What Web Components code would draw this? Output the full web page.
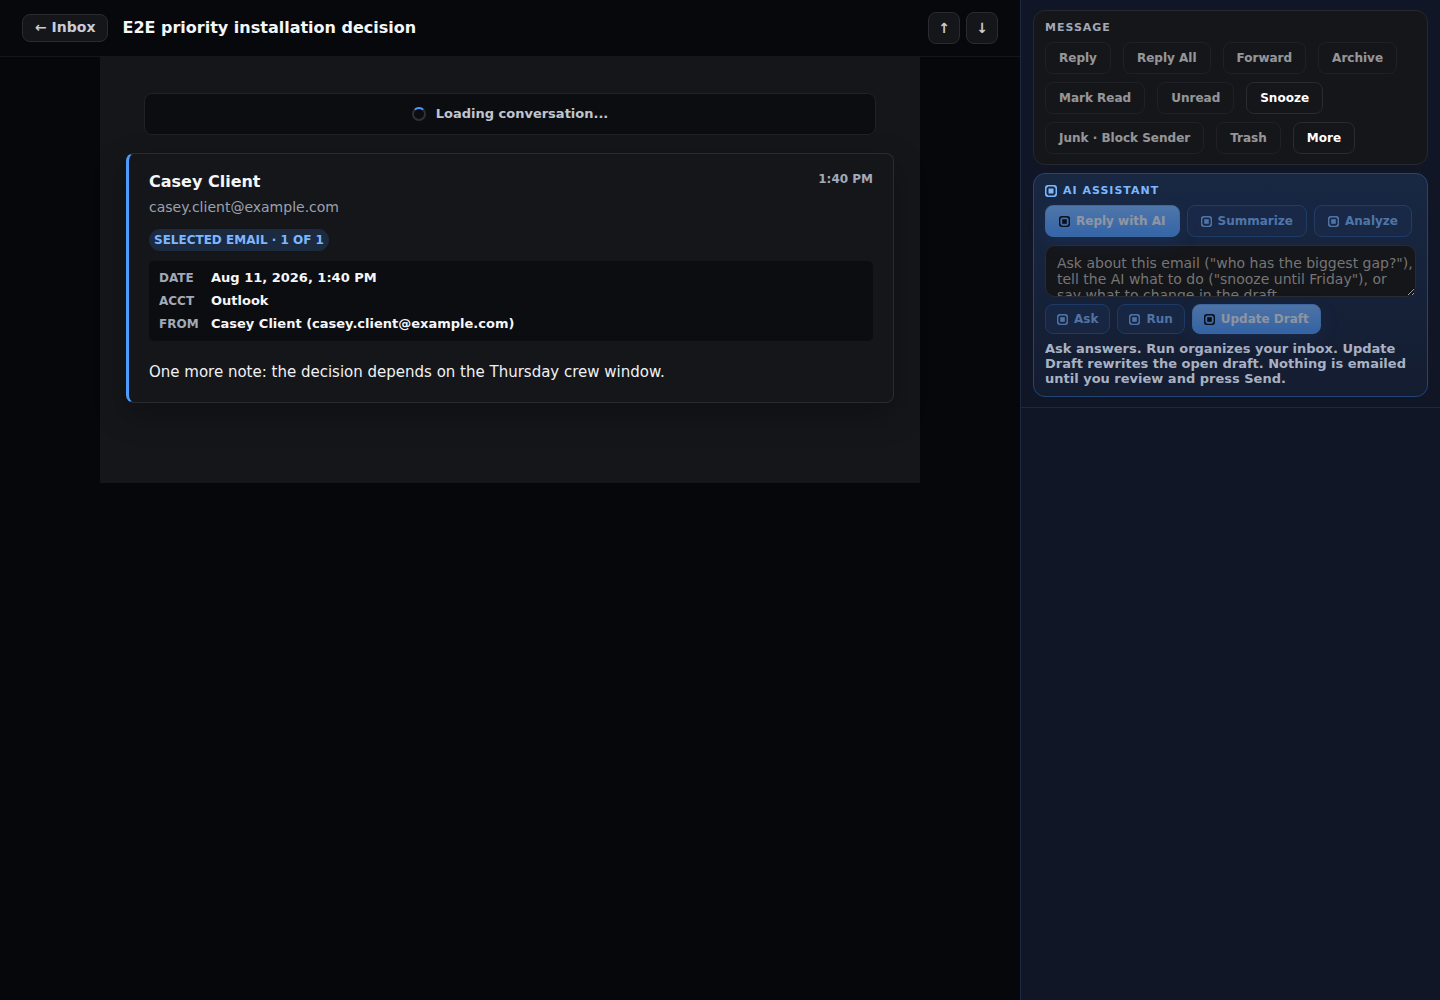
<!DOCTYPE html>
<html lang="en">
<head>
<meta charset="utf-8">
<title>E2E priority installation decision</title>
<style>
  html, body { margin: 0; min-height: 100%; background: #06070b; }
  body { font-family: "DejaVu Sans", sans-serif; color: #f5f6f8; font-size: 13px; }
</style>
</head>
<body>
<mail-reader></mail-reader>
<script>
const define = (name, html, setup) => {
  const template = document.createElement('template');
  template.innerHTML = `<style>*, ::before, ::after { box-sizing: border-box; } :host([hidden]) { display: none; }</style>` + html;
  customElements.define(name, class extends HTMLElement {
    constructor() {
      super();
      this.attachShadow({ mode: 'open' }).append(template.content.cloneNode(true));
    }
    connectedCallback() { if (setup) setup(this, this.shadowRoot); }
  });
};

define('ai-glyph', `
<style>
  :host { display: block; flex: none; width: 11px; height: 11px; }
  svg { display: block; width: 100%; height: 100%; }
</style>
<svg viewBox="0 0 12 12" aria-hidden="true">
  <path fill="currentColor" fill-rule="evenodd" d="M3 0h6a3 3 0 0 1 3 3v6a3 3 0 0 1-3 3H3a3 3 0 0 1-3-3V3a3 3 0 0 1 3-3zM3.2 1.5h5.6l1.7 1.7v5.6l-1.7 1.7H3.2L1.5 8.8V3.2z"/>
  <rect x="3.5" y="3.5" width="5" height="5" fill="currentColor"/>
</svg>`);

define('icon-button', `
<style>
  :host { display: block; }
  button {
    display: flex; align-items: center; justify-content: center;
    font: bold 14px/18px "DejaVu Sans", sans-serif;
    color: #c8cdd8; background: #15161a; border: 1px solid #2a2b30; border-radius: 8px;
    padding: 3px 12px 5px; cursor: pointer;
  }
  :host([square]) button { width: 32px; height: 32px; padding: 0; }
</style>
<button type="button"><slot></slot></button>`,
(host, root) => {
  if (host.title) root.querySelector('button').setAttribute('aria-label', host.title);
});

define('reader-bar', `
<style>
  :host {
    display: flex; align-items: center; gap: 14px; height: 57px; padding: 0 22px;
    background: #07080c; border-bottom: 1px solid #15161a;
  }
  h1 { flex: 1; margin: 0; font-size: 16px; line-height: 20px; font-weight: bold; }
  nav { display: flex; gap: 6px; }
</style>
<icon-button>← Inbox</icon-button>
<h1><slot></slot></h1>
<nav aria-label="Conversations">
  <icon-button square title="Previous">↑</icon-button>
  <icon-button square title="Next">↓</icon-button>
</nav>`);

define('loading-note', `
<style>
  :host {
    display: flex; align-items: center; justify-content: center; gap: 10px;
    margin: 0 18px; padding: 11px 12px; border: 1px solid #212227; border-radius: 8px;
    background: #0c0d11; color: #c0c5cf; font-size: 13px; line-height: 18px; font-weight: bold;
  }
  i { width: 14px; height: 14px; border: 2px solid #303136; border-top-color: #4d9bff; border-radius: 50%; }
</style>
<i></i><span role="status"><slot></slot></span>`);

define('meta-row', `
<style>
  :host { display: flex; align-items: baseline; line-height: 17px; font-weight: bold; }
  dt { width: 52px; font-size: 12px; color: #a2a9b8; }
  dd { margin: 0; font-size: 13px; }
</style>
<dt><slot name="label"></slot></dt><dd><slot></slot></dd>`);

define('mail-card', `
<style>
  :host {
    display: block; padding: 17px 20px 18px; background: #15161a;
    border: 1px solid #2a2b30; border-left: 3px solid #4d9bff; border-radius: 8px;
    box-shadow: 0 12px 32px rgba(0, 0, 0, .28);
  }
  header { display: flex; justify-content: space-between; align-items: flex-start; }
  h2 { margin: 0; font-size: 16px; line-height: 22px; }
  time { font-size: 12px; line-height: 16px; font-weight: bold; color: #a2a9b8; }
  address { margin-top: 4px; font-style: normal; font-size: 14px; line-height: 20px; color: #9ca1ae; }
  .tag {
    display: block; width: fit-content; margin-top: 12px; padding: 3px 5px; border-radius: 12px;
    background: #1c2a3f; color: #7db7ff; font-size: 12px; line-height: 16px; font-weight: bold;
  }
  dl {
    display: flex; flex-direction: column; gap: 5px; margin: 10px 0 0; padding: 8px 10px;
    background: #0c0d11; border-radius: 5px;
  }
  p { margin: 19px 0 0; font-size: 15px; line-height: 24px; color: #f0f1f4; }
</style>
<header><h2><slot name="sender"></slot></h2><time><slot name="time"></slot></time></header>
<address><slot name="address"></slot></address>
<span class="tag"><slot name="tag"></slot></span>
<dl><slot name="meta"></slot></dl>
<p><slot></slot></p>`);

define('action-button', `
<style>
  :host { display: block; }
  button {
    display: flex; align-items: center; gap: 6px; height: 32px; padding: 0 13px;
    font: bold 12px/16px "DejaVu Sans", sans-serif;
    color: #fff; background: #15161a; border: 1px solid #2a2b30; border-radius: 8px;
  }
  button:disabled { opacity: .55; }
  ai-glyph { display: none; }
  :host([ai]) ai-glyph { display: block; }
  :host([ai]) button { color: #7db7ff; background: #1a2b4c; border-color: #275089; }
  :host([ai=primary]) button {
    color: #f2f3f6; background: linear-gradient(#7db7ff, #4d9bff); border-color: #5c9ff0;
    box-shadow: 0 6px 18px rgba(45, 110, 220, .2);
  }
  :host([ai=primary]) ai-glyph { color: #000; }
  :host([compact]) button { height: 30px; padding: 0 11px; }
</style>
<button type="button"><ai-glyph></ai-glyph><slot></slot></button>`,
(host, root) => { root.querySelector('button').disabled = host.hasAttribute('off'); });

define('message-panel', `
<style>
  :host {
    display: block; padding: 10px 11px; background: #15161a;
    border: 1px solid #27282d; border-radius: 12px;
  }
  h2 { margin: 0 0 8px; font-size: 11px; line-height: 13px; letter-spacing: 1px; color: #a2a9b8; }
  div { display: flex; flex-wrap: wrap; gap: 8px 12px; }
</style>
<h2>MESSAGE</h2>
<div>
  <action-button off>Reply</action-button>
  <action-button off>Reply All</action-button>
  <action-button off>Forward</action-button>
  <action-button off>Archive</action-button>
  <action-button off>Mark Read</action-button>
  <action-button off>Unread</action-button>
  <action-button>Snooze</action-button>
  <action-button off>Junk · Block Sender</action-button>
  <action-button off>Trash</action-button>
  <action-button>More</action-button>
</div>`);

define('assistant-panel', `
<style>
  :host {
    display: block; padding: 10px 11px; border: 1px solid #244674; border-radius: 12px;
    background: linear-gradient(#182843, #141c30);
  }
  h2 {
    display: flex; align-items: center; gap: 6px; margin: 0 0 8px;
    font-size: 11px; line-height: 13px; letter-spacing: 1px; color: #7db7ff;
  }
  h2 ai-glyph { width: 12px; height: 12px; }
  .row { display: flex; gap: 7px; }
  textarea {
    display: block; width: 100%; height: 52px; margin: 8px 0 7px; padding: 9px 1px 9px 11px;
    font: 14px/16px "DejaVu Sans", sans-serif; color: #fff; background: #15161a;
    border: 1px solid #2a2b30; border-radius: 10px; resize: vertical; overflow: hidden;
  }
  textarea::placeholder { color: #757575; }
  p { margin: 7px 0 0; font-size: 13px; line-height: 15px; font-weight: bold; color: #a9b1c2; }
</style>
<h2><ai-glyph></ai-glyph>AI ASSISTANT</h2>
<div class="row">
  <action-button ai="primary" off>Reply with AI</action-button>
  <action-button ai off>Summarize</action-button>
  <action-button ai off>Analyze</action-button>
</div>
<textarea aria-label="Ask about this email" placeholder='Ask about this email ("who has the biggest gap?"), tell the AI what to do ("snooze until Friday"), or say what to change in the draft.'></textarea>
<div class="row">
  <action-button ai compact off>Ask</action-button>
  <action-button ai compact off>Run</action-button>
  <action-button ai="primary" compact off>Update Draft</action-button>
</div>
<p>Ask answers. Run organizes your inbox. Update Draft rewrites the open draft. Nothing is emailed until you review and press Send.</p>`);

define('mail-reader', `
<style>
  :host { display: grid; grid-template-columns: minmax(0, 1fr) 420px; min-height: 100vh; }
  article {
    max-width: 820px; margin: 0 auto; padding: 36px 26px 80px; background: #15161a;
    display: flex; flex-direction: column; gap: 18px;
  }
  aside { background: #101625; border-left: 1px solid #1a2a45; }
  .tools {
    display: flex; flex-direction: column; gap: 8px; padding: 10px 12px;
    border-bottom: 1px solid #1a2a45;
  }
</style>
<main>
  <reader-bar>E2E priority installation decision</reader-bar>
  <article>
    <loading-note>Loading conversation...</loading-note>
    <mail-card>
      <span slot="sender">Casey Client</span>
      <span slot="time">1:40 PM</span>
      <span slot="address">casey.client@example.com</span>
      <span slot="tag">SELECTED EMAIL · 1 OF 1</span>
      <meta-row slot="meta"><span slot="label">DATE</span>Aug 11, 2026, 1:40 PM</meta-row>
      <meta-row slot="meta"><span slot="label">ACCT</span>Outlook</meta-row>
      <meta-row slot="meta"><span slot="label">FROM</span>Casey Client (casey.client@example.com)</meta-row>
      One more note: the decision depends on the Thursday crew window.
    </mail-card>
  </article>
</main>
<aside>
  <div class="tools">
    <message-panel></message-panel>
    <assistant-panel></assistant-panel>
  </div>
</aside>`);
</script>
</body>
</html>
